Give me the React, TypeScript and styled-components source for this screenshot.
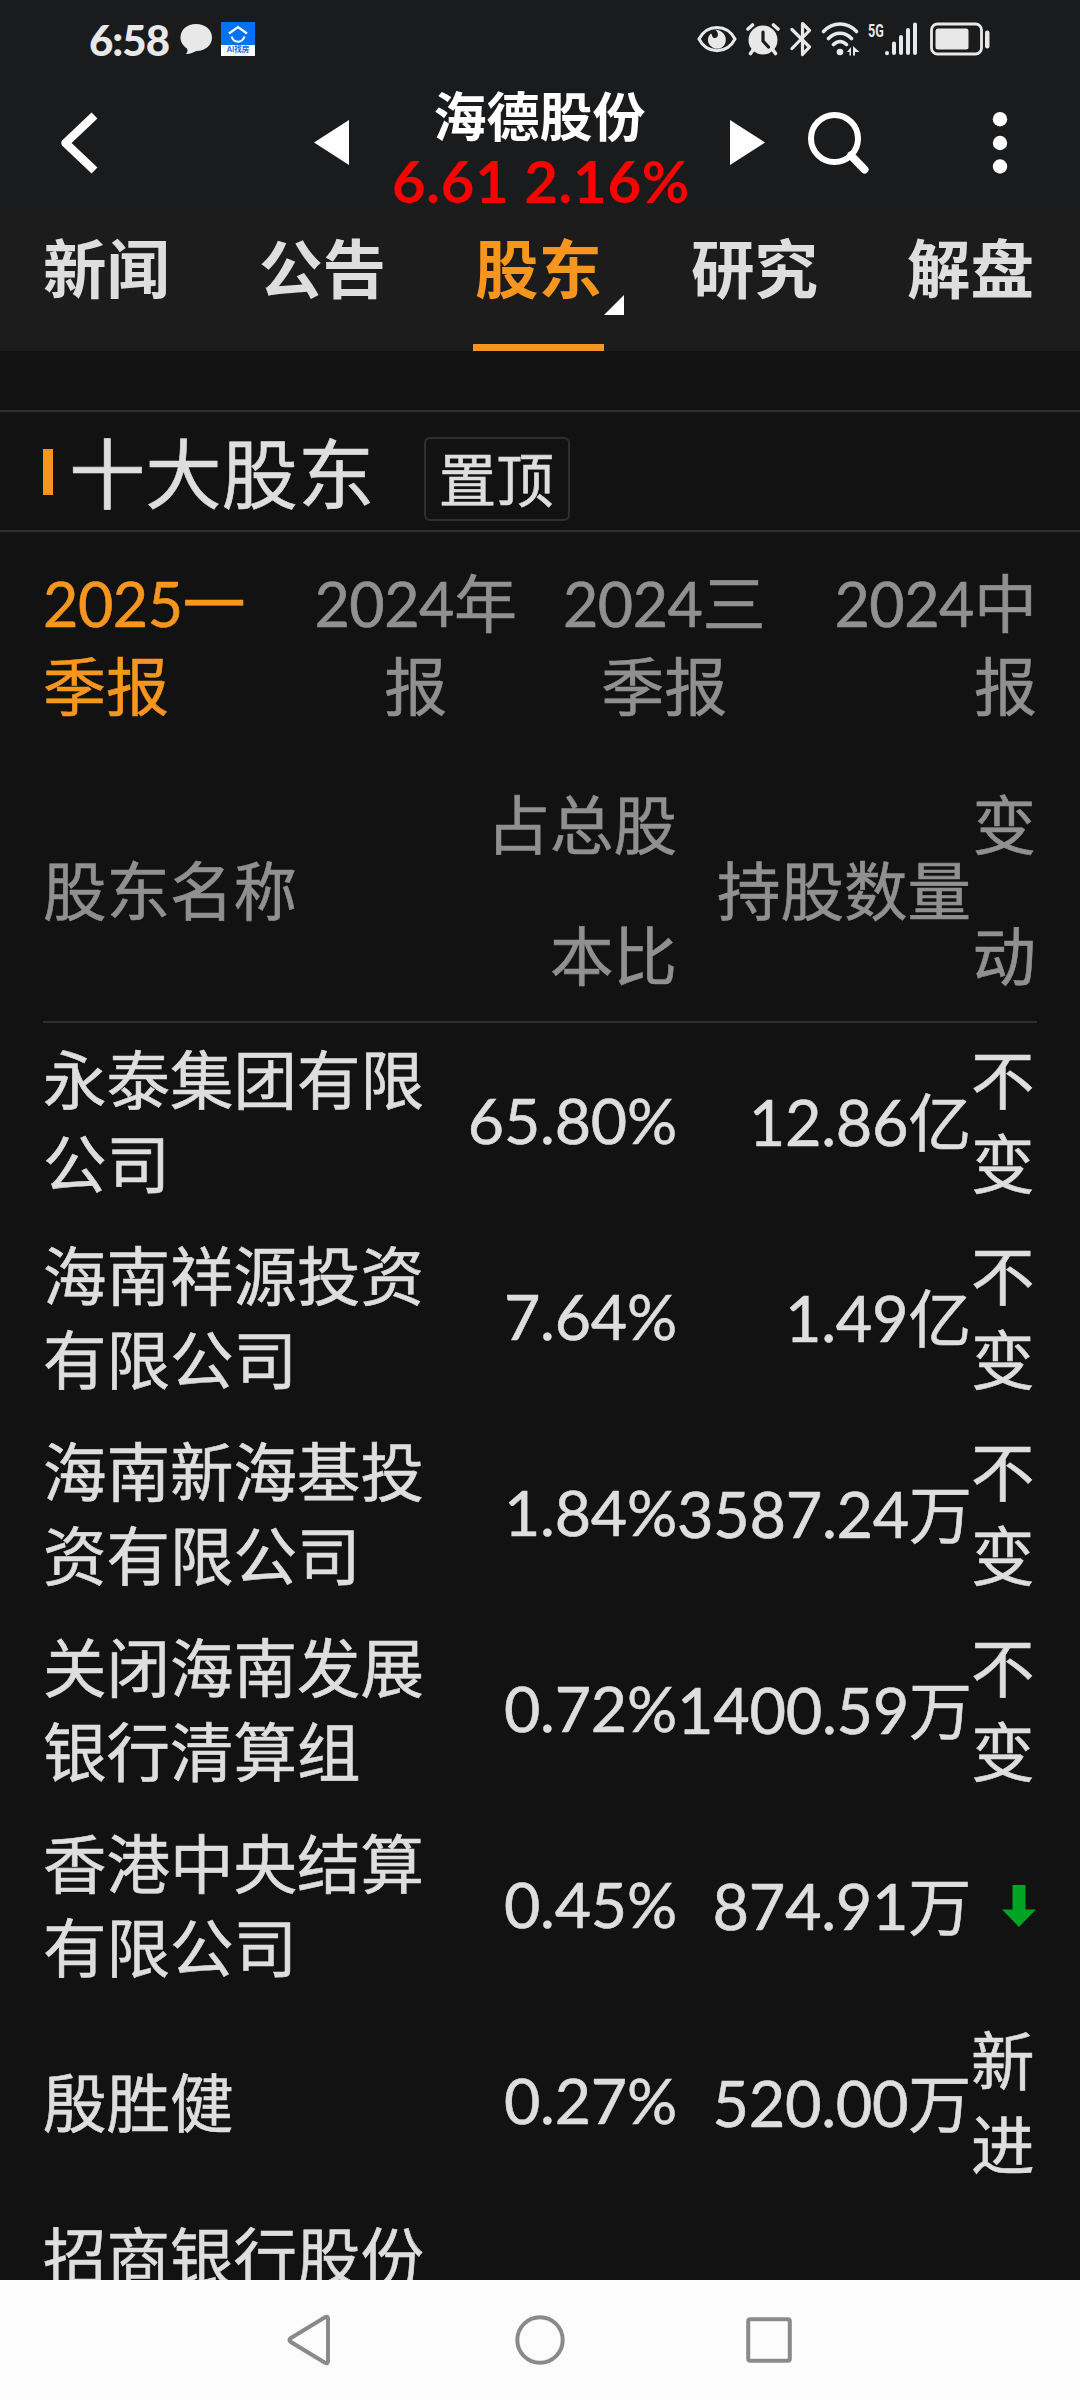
import React from "react";
import styled, { createGlobalStyle } from "styled-components";

const Global = createGlobalStyle`
  * { box-sizing: border-box; }
  html, body { margin: 0; padding: 0; background: #121212; }
  body {
    font-family: Lato, "Noto Sans CJK SC", sans-serif;
    color: #dedede;
  }
`;

const Screen = styled.div`
  width: 1080px;
  height: 2400px;
  display: flex;
  flex-direction: column;
  overflow: hidden;
  background: #121212;
`;

const StatusBar = styled.header`
  height: 82px;
  flex: none;
  display: flex;
  justify-content: space-between;
  align-items: flex-start;
  padding: 15px 90px 0 89px;
  background: #1a1b1d;
`;

const StatusGroup = styled.div`
  display: flex;
  align-items: center;
  height: 48px;
`;

const Clock = styled.span`
  width: 91px;
  padding-top: 2px;
  font-size: 42px;
  font-weight: 900;
  line-height: 46px;
  letter-spacing: -1px;
  color: #e8e8e8;
  white-space: nowrap;
`;

const AppBadge = styled.div`
  width: 34px;
  height: 34px;
  margin-left: 9px;
  display: flex;
  flex-direction: column;
  align-items: center;
  background: #0073f5;
`;

const BadgeLabel = styled.span`
  width: 34px;
  height: 11px;
  background: #fff;
  color: #0067d8;
  font-size: 7.5px;
  font-weight: 700;
  line-height: 10px;
  text-align: center;
  white-space: nowrap;
  overflow: hidden;
`;

const NetworkLabel = styled.span`
  width: 16px;
  height: 18px;
  margin: -16px 0 0 7px;
  font-family: Roboto, sans-serif;
  font-size: 19px;
  font-weight: 700;
  line-height: 18px;
  color: #e8e8e8;
  transform: scaleX(0.66);
  transform-origin: left center;
  white-space: nowrap;
`;

const Icon = styled.svg<{ $ml?: number }>`
  display: block;
  flex: none;
  margin-left: ${(p) => p.$ml ?? 0}px;
`;

const TitleBar = styled.div`
  height: 124px;
  flex: none;
  display: flex;
  align-items: flex-start;
  padding: 0 72px 0 61px;
  background: #1a1b1d;
`;

const IconButton = styled.button<{ $ml?: number; $mt: number }>`
  margin: ${(p) => p.$mt}px 0 0 ${(p) => p.$ml ?? 0}px;
  padding: 0;
  border: 0;
  background: none;
  display: block;
  flex: none;
`;

const StockHeading = styled.div`
  width: 382px;
  display: flex;
  flex-direction: column;
  align-items: center;
`;

const StockName = styled.h1`
  margin: 4px 0 0;
  font-size: 53px;
  font-weight: 700;
  line-height: 62px;
  color: #fff;
`;

const StockQuote = styled.div`
  margin-top: 2px;
  padding-left: 3px;
  font-size: 58px;
  font-weight: 700;
  line-height: 62px;
  letter-spacing: 0.7px;
  color: #fe0000;
  white-space: nowrap;
`;

const TabBar = styled.nav`
  height: 145px;
  flex: none;
  display: flex;
  justify-content: space-between;
  padding: 0 44px 0 41px;
  background: #1c1c1c;
`;

const Tab = styled.a<{ $active?: boolean }>`
  position: relative;
  width: 131px;
  height: 145px;
  border-bottom: 7px solid ${(p) => (p.$active ? "#f6961e" : "transparent")};
  color: ${(p) => (p.$active ? "#f6961e" : "#dedede")};
  font-size: 63.5px;
  font-weight: 700;
  line-height: 125px;
  text-align: center;
  white-space: nowrap;
`;

const TabCorner = styled.i`
  position: absolute;
  left: 131px;
  top: 89px;
  border-left: 20px solid transparent;
  border-bottom: 20px solid #fff;
`;

const SectionHead = styled.div`
  height: 122px;
  flex: none;
  margin-top: 59px;
  display: flex;
  align-items: center;
  padding: 2px 43px 0;
  border-top: 2px solid #2f2f2f;
  border-bottom: 2px solid #2f2f2f;
`;

const Marker = styled.span`
  width: 10px;
  height: 46px;
  background: #f6961e;
`;

const SectionTitle = styled.h2`
  margin: 3px 0 0 16px;
  font-size: 76.3px;
  font-weight: 400;
  line-height: 100px;
  -webkit-text-stroke: 0.6px currentColor;
`;

const PinButton = styled.button`
  width: 146px;
  height: 84px;
  margin: 14px 0 0 50px;
  padding: 2px 2px 0 0;
  border: 2px solid #2f2f2f;
  border-radius: 6px;
  background: none;
  color: #dedede;
  font: 400 57.5px/78px Lato, "Noto Sans CJK SC", sans-serif;
  -webkit-text-stroke: 0.6px currentColor;
`;

const Periods = styled.div`
  flex: none;
  display: grid;
  grid-template-columns: repeat(4, 248.5px);
  margin-top: 30px;
  padding: 0 43px;
  height: 197px;
`;

const Period = styled.div<{ $active?: boolean; $align: "left" | "center" | "right" }>`
  font-size: 63px;
  line-height: 82px;
  text-align: ${(p) => p.$align};
  color: ${(p) => (p.$active ? "#f6961e" : "#909090")};
  word-break: break-all;
  -webkit-text-stroke: 0.6px currentColor;
`;

const Year = styled.span`
  font-size: 61px;
  letter-spacing: -0.5px;
`;

const columns = "384px 250px 294px 65px";

const TableHead = styled.div`
  flex: none;
  display: grid;
  grid-template-columns: ${columns};
  align-items: center;
  height: 264px;
  margin: 0 43px 1px;
  padding-bottom: 3px;
  border-bottom: 2px solid #2f2f2f;
  font-size: 63.5px;
  line-height: 131px;
  color: #909090;
  -webkit-text-stroke: 0.6px currentColor;
`;

const HeadCell = styled.div<{ $indent?: number; $right?: boolean }>`
  padding-left: ${(p) => p.$indent ?? 0}px;
  text-align: ${(p) => (p.$right ? "right" : "left")};
  word-break: break-all;
`;

const Rows = styled.div`
  flex: 1;
  min-height: 0;
  overflow: hidden;
  padding: 0 43px;
`;

const Row = styled.div`
  display: grid;
  grid-template-columns: ${columns};
  align-items: center;
  height: 196.1px;
  font-size: 63.5px;
  line-height: 84px;
  -webkit-text-stroke: 0.6px currentColor;
`;

const Holder = styled.div`
  word-break: break-all;
`;

const Ratio = styled.div`
  padding-bottom: 5px;
  font-size: 62.7px;
  letter-spacing: -0.2px;
  text-align: right;
  white-space: nowrap;
`;

const Quantity = styled.div`
  font-size: 63px;
  letter-spacing: -0.3px;
  text-align: right;
  white-space: nowrap;
`;

const Change = styled.div`
  display: flex;
  justify-content: flex-end;
  word-break: break-all;
`;

const NavBar = styled.footer`
  height: 120px;
  flex: none;
  display: flex;
  align-items: center;
  justify-content: center;
  padding-right: 2px;
  background: #fcfcfc;
`;

interface HolderRow {
  name: string;
  ratio: string;
  quantity: string;
  change: string;
}

const holders: HolderRow[] = [
  { name: "永泰集团有限公司", ratio: "65.80%", quantity: "12.86亿", change: "不变" },
  { name: "海南祥源投资有限公司", ratio: "7.64%", quantity: "1.49亿", change: "不变" },
  { name: "海南新海基投资有限公司", ratio: "1.84%", quantity: "3587.24万", change: "不变" },
  { name: "关闭海南发展银行清算组", ratio: "0.72%", quantity: "1400.59万", change: "不变" },
  { name: "香港中央结算有限公司", ratio: "0.45%", quantity: "874.91万", change: "down" },
  { name: "殷胜健", ratio: "0.27%", quantity: "520.00万", change: "新进" },
  { name: "招商银行股份有限公司", ratio: "", quantity: "", change: "" },
];

const periods = [
  { year: "2025", label: "一季报", align: "left" as const },
  { year: "2024", label: "年报", align: "center" as const },
  { year: "2024", label: "三季报", align: "center" as const },
  { year: "2024", label: "中报", align: "right" as const },
];

const tabs = ["新闻", "公告", "股东", "研究", "解盘"];

const fg = "#e8e8e8";

function StatusIcons() {
  return (
    <StatusGroup>
      <Icon width="40" height="28" viewBox="0 0 40 28">
        <path d="M2 14C10-1.500 30-1.500 38 14C30 29.500 10 29.500 2 14Z" fill="none" stroke={fg} strokeWidth="3" />
        <path d="M18 4.500C23 8 21 14 17 13C15 12.500 15.500 10 14 8.500C11 11 10 15 12 19C16 25.500 25 25 28 19C31 12 26 5 18 4.500Z" fill={fg} />
      </Icon>
      <Icon width="34" height="34" viewBox="0 0 34 34" $ml={9}>
        <circle cx="17" cy="18" r="14.500" fill={fg} />
        <path d="M2 7L6.500 3M27.500 3L32 7M7 28L4.500 31.500M27 28L29.500 31.500" stroke={fg} strokeWidth="3.600" strokeLinecap="round" />
        <path d="M17 10V19L22.500 25" fill="none" stroke="#1a1b1d" strokeWidth="3.200" strokeLinecap="round" />
      </Icon>
      <Icon width="22" height="36" viewBox="0 0 22 36" $ml={10}>
        <path d="M2 8.500L19.500 26L12.500 33.500V2.500L19.500 9.500L2 27.500" fill="none" stroke={fg} strokeWidth="3.200" strokeLinecap="round" strokeLinejoin="round" />
      </Icon>
      <Icon width="40" height="34" viewBox="0 0 40 34" $ml={9}>
        <path d="M2.500 9.500C12-.5 26-.5 35.500 9.500M7.500 16.500C14 9.500 24 9.500 30.500 16.500M12.500 22.500C16.500 18.500 21.500 18.500 25.500 22.500" fill="none" stroke={fg} strokeWidth="3.600" strokeLinecap="round" />
        <circle cx="19" cy="30" r="3.300" fill={fg} />
        <path d="M26 30L30 25V33.500H28.500V30ZM32 24L38.500 30H34V33.500H32Z" fill={fg} />
      </Icon>
      <NetworkLabel>5G</NetworkLabel>
      <Icon width="34" height="34" viewBox="0 0 34 34">
        <path d="M3 31V31.200M10 21.500V31M17 15V31M24 8V31M31 2.500V31" stroke={fg} strokeWidth="4" strokeLinecap="round" />
      </Icon>
      <Icon width="61" height="34" viewBox="0 0 61 34" $ml={11}>
        <rect x="2.500" y="2" width="50" height="30" rx="6" fill="none" stroke={fg} strokeWidth="2.800" />
        <rect x="6.500" y="6.500" width="33" height="21" rx="2.500" fill={fg} />
        <rect x="56" y="8.500" width="4.500" height="18" rx="2.200" fill={fg} />
      </Icon>
    </StatusGroup>
  );
}

export default function App() {
  return (
    <Screen>
      <Global />
      <StatusBar>
        <StatusGroup>
          <Clock>6:58</Clock>
          <Icon width="32" height="32" viewBox="0 0 32 32">
            <path d="M16 1C25 1 32 6.500 32 14.500C32 22.500 25 28 16.500 28C13 29.500 9.500 31.500 6 31C7.500 29.500 8 27.500 7 25.500C3 23 .5 19 .5 14.500C.5 6.500 7 1 16 1Z" fill={fg} />
          </Icon>
          <AppBadge>
            <Icon width="34" height="23" viewBox="0 0 34 23">
              <path d="M8 11.500L17 5L26 11.500M10.500 14.500C13 21.500 21 21.500 23.500 14.500" fill="none" stroke="#fff" strokeWidth="2.200" />
            </Icon>
            <BadgeLabel>AI找房</BadgeLabel>
          </AppBadge>
        </StatusGroup>
        <StatusIcons />
      </StatusBar>

      <TitleBar>
        <IconButton $mt={30} aria-label="返回">
          <Icon width="38" height="62" viewBox="0 0 38 62">
            <path d="M33.500 3.500L4.500 31L33.500 58.500" fill="none" stroke="#fff" strokeWidth="8.500" strokeLinejoin="round" />
          </Icon>
        </IconButton>
        <IconButton $mt={38} $ml={215}>
          <Icon width="35" height="45" viewBox="0 0 35 45">
            <path d="M0 22.500L35 0V45Z" fill="#fff" />
          </Icon>
        </IconButton>
        <StockHeading>
          <StockName>海德股份</StockName>
          <StockQuote>6.61 2.16%</StockQuote>
        </StockHeading>
        <IconButton $mt={38}>
          <Icon width="35" height="45" viewBox="0 0 35 45">
            <path d="M35 22.500L0 0V45Z" fill="#fff" />
          </Icon>
        </IconButton>
        <IconButton $mt={30} $ml={43}>
          <Icon width="61" height="62" viewBox="0 0 61 62">
            <circle cx="26.500" cy="26.500" r="23.500" fill="none" stroke="#fff" strokeWidth="6" />
            <path d="M43 43.500L56.500 57.500" stroke="#fff" strokeWidth="8" strokeLinecap="round" />
          </Icon>
        </IconButton>
        <IconButton $mt={30} $ml={123}>
          <Icon width="16" height="62" viewBox="0 0 16 62">
            <circle cx="8" cy="7.200" r="7.200" fill="#fff" />
            <circle cx="8" cy="31" r="7.200" fill="#fff" />
            <circle cx="8" cy="54.500" r="7.200" fill="#fff" />
          </Icon>
        </IconButton>
      </TitleBar>

      <TabBar>
        {tabs.map((t) => (
          <Tab key={t} $active={t === "股东"}>
            {t}
            {t === "股东" && <TabCorner />}
          </Tab>
        ))}
      </TabBar>

      <SectionHead>
        <Marker />
        <SectionTitle>十大股东</SectionTitle>
        <PinButton>置顶</PinButton>
      </SectionHead>

      <Periods>
        {periods.map((p, i) => (
          <Period key={p.label} $active={i === 0} $align={p.align}>
            <Year>{p.year}</Year>
            {p.label}
          </Period>
        ))}
      </Periods>

      <TableHead>
        <HeadCell>股东名称</HeadCell>
        <HeadCell $right $indent={40}>占总股本比</HeadCell>
        <HeadCell $right>持股数量</HeadCell>
        <HeadCell $right>变动</HeadCell>
      </TableHead>

      <Rows>
        {holders.map((h) => (
          <Row key={h.name}>
            <Holder>{h.name}</Holder>
            <Ratio>{h.ratio}</Ratio>
            <Quantity>{h.quantity}</Quantity>
            <Change>
              {h.change === "down" ? (
                <Icon width="34" height="42" viewBox="0 0 34 42">
                  <path d="M10.500 0H23.500V24.500H34L17 42L0 24.500H10.500Z" fill="#00a321" />
                </Icon>
              ) : (
                h.change
              )}
            </Change>
          </Row>
        ))}
      </Rows>

      <NavBar>
        <Icon width="44" height="52" viewBox="0 0 44 52">
          <path d="M3.500 24.200L38 3.200Q41 1.500 41 5V47Q41 50.500 38 48.800L3.500 27.800Q1.500 26 3.500 24.200Z" fill="none" stroke="#8a8a8a" strokeWidth="4" />
        </Icon>
        <Icon width="50" height="50" viewBox="0 0 50 50" $ml={184}>
          <circle cx="25" cy="25" r="22.700" fill="none" stroke="#8a8a8a" strokeWidth="4" />
        </Icon>
        <Icon width="46" height="46" viewBox="0 0 46 46" $ml={181}>
          <rect x="2.200" y="2.200" width="41.600" height="41.600" rx="2" fill="none" stroke="#8a8a8a" strokeWidth="4" />
        </Icon>
      </NavBar>
    </Screen>
  );
}
